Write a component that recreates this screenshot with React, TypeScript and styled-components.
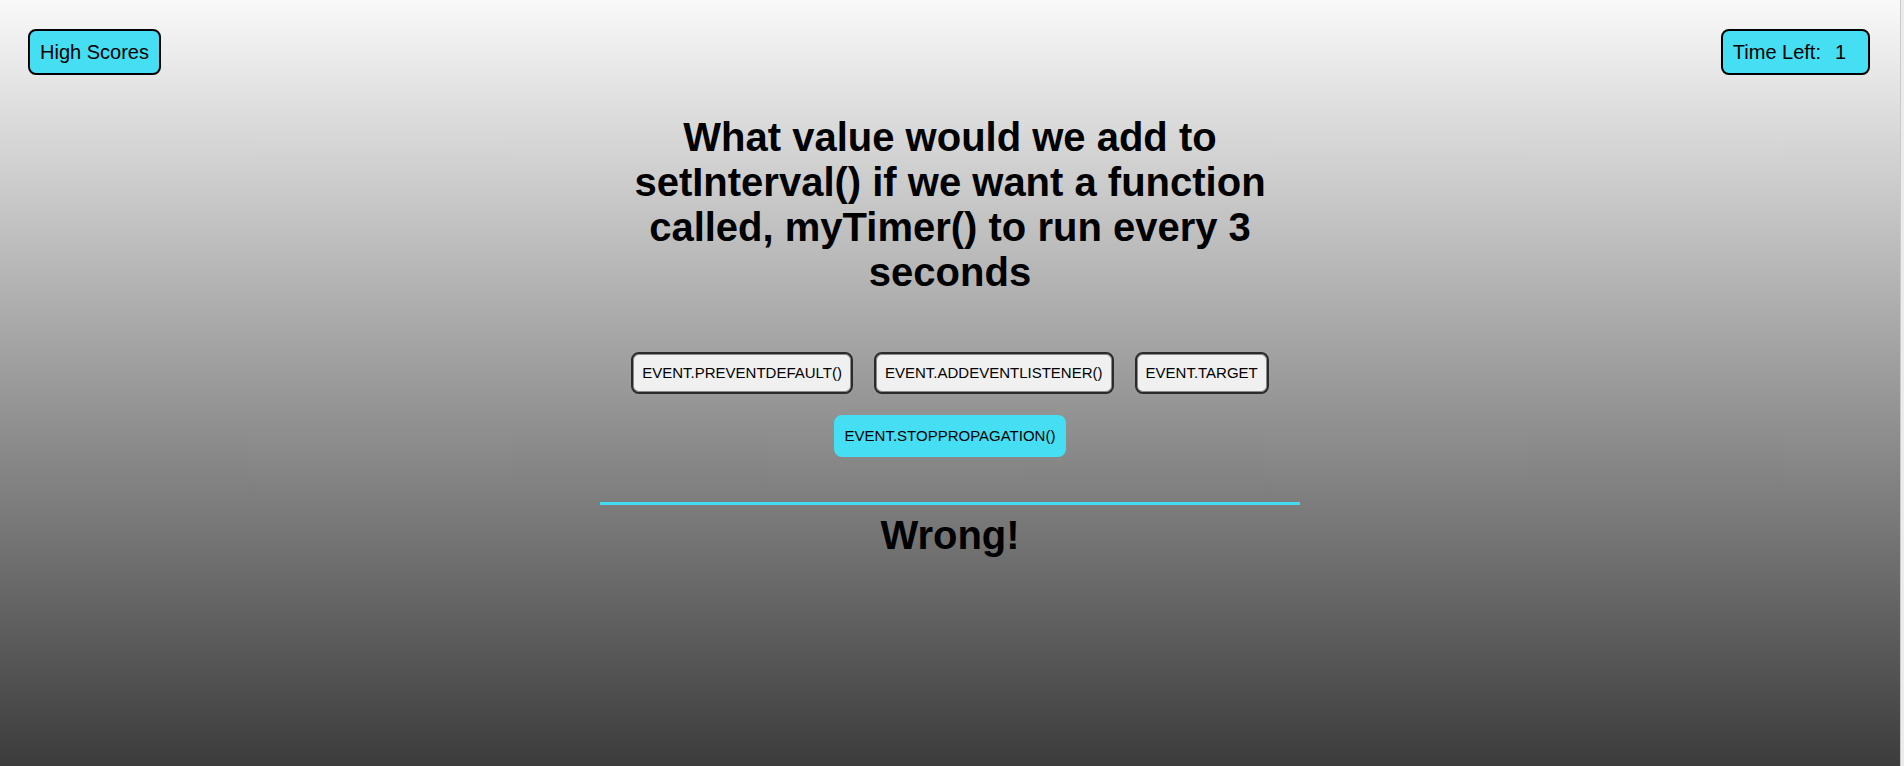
import React from 'react';
import styled, { createGlobalStyle } from 'styled-components';

const GlobalStyle = createGlobalStyle`
  html, body {
    margin: 0;
    padding: 0;
    background: #ececec;
  }
  body {
    font-family: "Liberation Sans", Arial, sans-serif;
  }
`;

const Page_ = styled.div`
  min-height: 100vh;
  box-sizing: border-box;
  margin-right: 3px;
  border-right: 1px solid #c9c9c9;
  background: linear-gradient(to bottom, #f9f9fa, #3c3c3c);
  display: flex;
  flex-direction: column;
`;

const Header_ = styled.header`
  display: flex;
  justify-content: space-between;
  align-items: flex-start;
  padding: 29px 30px 0 28px;
`;

const Pill_ = styled.div`
  box-sizing: border-box;
  height: 46px;
  display: flex;
  align-items: center;
  padding: 0 10px;
  background-color: #46def3;
  border: 2px solid #000;
  border-radius: 8px;
  font-size: 20px;
  color: #000;
`;

const ScoresButton_ = styled(Pill_).attrs({ as: 'button' })`
  font-family: "Liberation Sans", Arial, sans-serif;
  cursor: pointer;
`;

const Seconds_ = styled.span`
  display: inline-block;
  min-width: 23px;
  margin-left: 14px;
`;

const Quiz_ = styled.main`
  width: 700px;
  margin: 0 auto;
  display: flex;
  flex-direction: column;
  align-items: center;
`;

const Question_ = styled.h1`
  margin: 40px 0 0;
  font-size: 40px;
  font-weight: bold;
  text-align: center;
  color: #000;
`;

const Choices_ = styled.div`
  display: flex;
  flex-wrap: wrap;
  justify-content: center;
  gap: 21px 21px;
  margin-top: 57px;
`;

const Choice_ = styled.button<{ $picked?: boolean }>`
  box-sizing: border-box;
  font-family: "Liberation Sans", Arial, sans-serif;
  font-size: 15px;
  line-height: 18px;
  text-transform: uppercase;
  color: #000;
  border-radius: 8px;
  cursor: pointer;
  padding: 10px 9px;
  background-color: ${(p) => (p.$picked ? '#46def3' : '#f0f0f0')};
  border: 2px solid ${(p) => (p.$picked ? '#46def3' : '#2a2a2a')};
  box-shadow: ${(p) => (p.$picked ? 'none' : 'inset 0 0 0 1px #8a8a8a')};
`;

const Divider_ = styled.hr`
  width: 700px;
  height: 3px;
  margin: 45px 0 0;
  border: none;
  background-color: #45daef;
`;

const Result_ = styled.h2`
  margin: 8px 0 0;
  font-size: 40px;
  font-weight: bold;
  color: #000;
`;

const choices = [
  'event.preventDefault()',
  'event.addEventListener()',
  'event.target',
  'event.stopPropagation()',
];

function App() {
  const picked = 3;
  return (
    <Page_>
      <GlobalStyle />
      <Header_>
        <ScoresButton_>High Scores</ScoresButton_>
        <Pill_>
          Time Left:<Seconds_>1</Seconds_>
        </Pill_>
      </Header_>
      <Quiz_>
        <Question_>
          What value would we add to setInterval() if we want a function called, myTimer() to run every 3 seconds
        </Question_>
        <Choices_>
          {choices.map((c, i) => (
            <Choice_ key={c} $picked={i === picked}>
              {c}
            </Choice_>
          ))}
        </Choices_>
        <Divider_ />
        <Result_>Wrong!</Result_>
      </Quiz_>
    </Page_>
  );
}

export default App;
